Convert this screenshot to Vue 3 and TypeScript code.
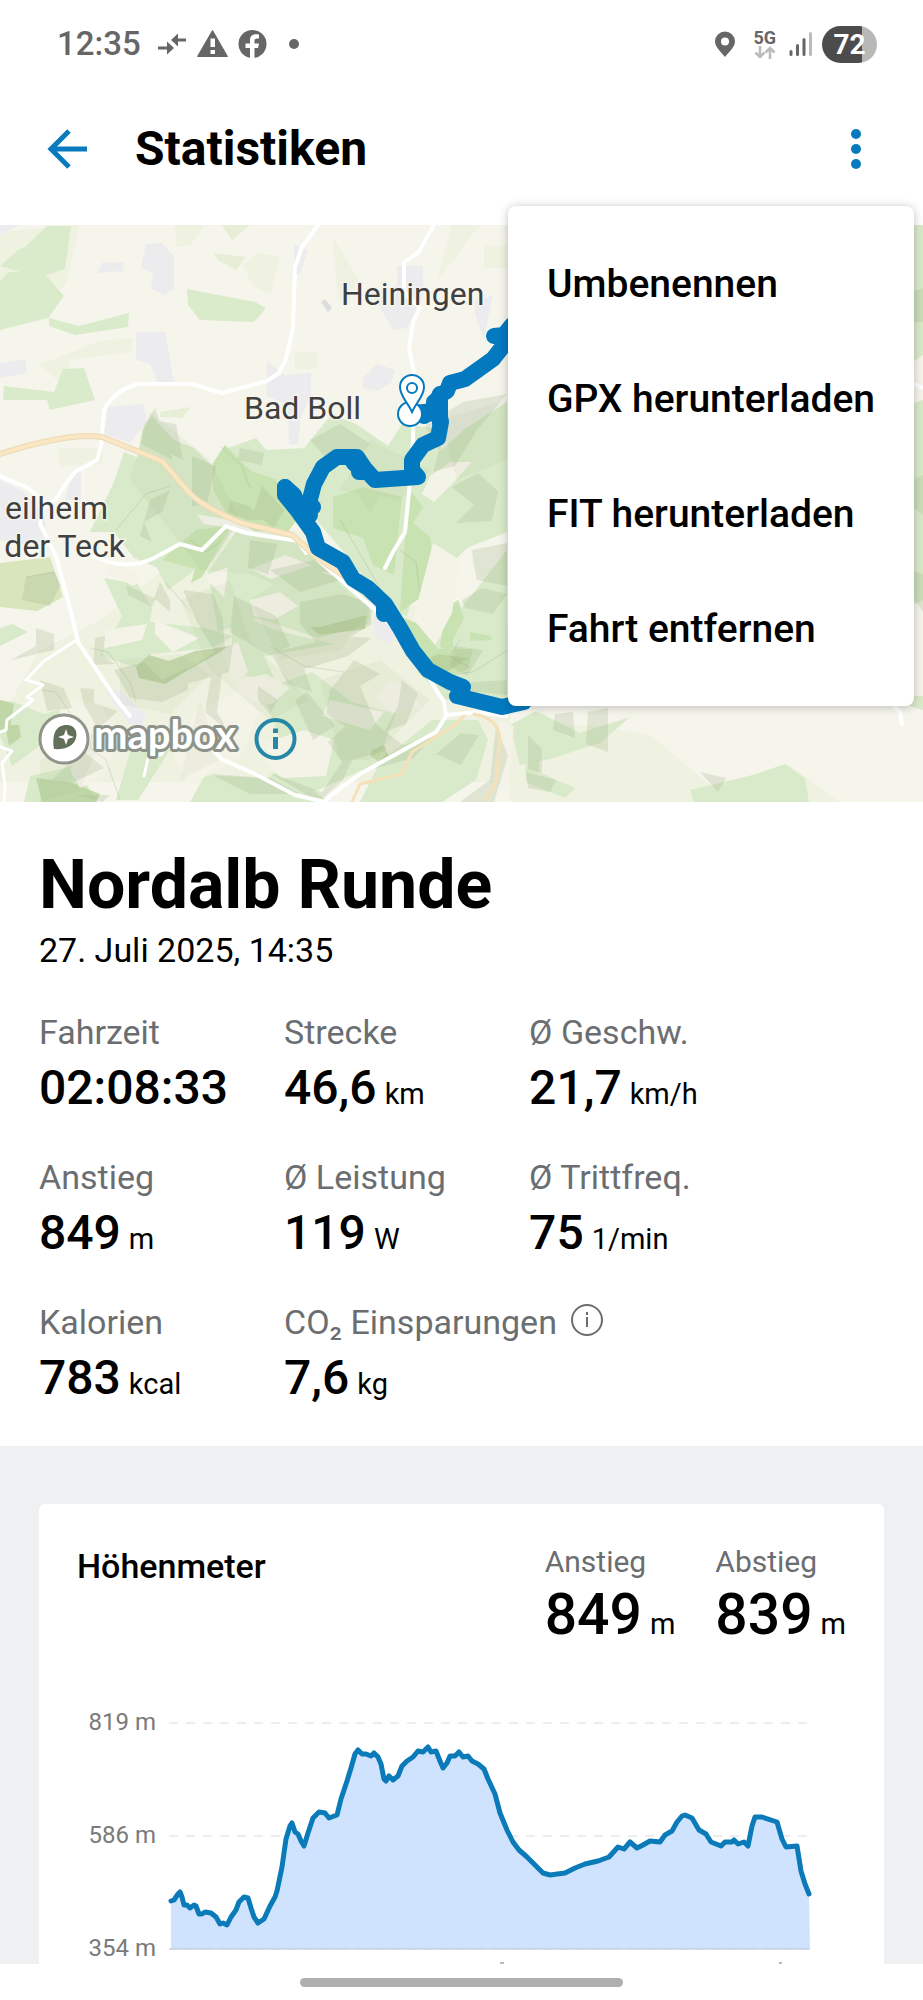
<script setup lang="ts">
import { ref } from 'vue'

interface Stat {
  label: string
  value: string
  unit?: string
  wide?: boolean
}

const menuOpen = ref(true)
const menuItems: string[] = ['Umbenennen', 'GPX herunterladen', 'FIT herunterladen', 'Fahrt entfernen']

const stats: Stat[] = [
  { label: 'Fahrzeit', value: '02:08:33' },
  { label: 'Strecke', value: '46,6', unit: 'km' },
  { label: 'Ø Geschw.', value: '21,7', unit: 'km/h' },
  { label: 'Anstieg', value: '849', unit: 'm' },
  { label: 'Ø Leistung', value: '119', unit: 'W' },
  { label: 'Ø Trittfreq.', value: '75', unit: '1/min' },
  { label: 'Kalorien', value: '783', unit: 'kcal' },
  { label: 'CO₂ Einsparungen', value: '7,6', unit: 'kg', wide: true },
]

const totals: Stat[] = [
  { label: 'Anstieg', value: '849', unit: 'm' },
  { label: 'Abstieg', value: '839', unit: 'm' },
]

const gridLines = [
  { label: '819 m', y: 74 },
  { label: '586 m', y: 187 },
  { label: '354 m', y: 300 },
]

// Elevation profile, in plot coordinates.
const profile: [number, number][] = [
  [94, 252], [97, 251], [101, 245], [103, 243], [105, 248], [107, 256], [110, 256], [113, 259], [117, 256],
  [119, 257], [122, 265], [125, 265], [128, 263], [134, 264], [139, 268], [143, 275], [146, 274], [150, 276],
  [154, 268], [159, 261], [162, 253], [167, 248], [171, 249], [174, 259], [177, 268], [181, 274], [187, 270],
  [193, 257], [198, 248], [200, 242], [205, 218], [209, 190], [213, 177], [215, 174], [218, 183], [221, 185],
  [224, 192], [227, 197], [231, 184], [236, 169], [242, 163], [248, 164], [252, 169], [260, 166], [264, 150],
  [270, 132], [274, 119], [278, 105], [281, 101], [285, 105], [289, 105], [294, 107], [297, 104], [301, 108],
  [304, 115], [307, 130], [309, 132], [312, 127], [316, 131], [321, 127], [325, 117], [330, 112], [336, 108],
  [341, 102], [346, 103], [351, 98], [354, 103], [359, 102], [363, 112], [366, 119], [370, 114], [373, 107],
  [378, 107], [382, 103], [386, 108], [391, 107], [395, 112], [401, 115], [407, 120], [411, 130], [418, 145],
  [423, 164], [430, 181], [436, 193], [442, 201], [450, 208], [459, 217], [466, 224], [473, 226], [488, 224],
  [498, 219], [508, 215], [521, 212], [532, 208], [541, 198], [547, 200], [553, 193], [560, 199], [566, 196],
  [573, 192], [583, 193], [588, 186], [595, 182], [600, 173], [605, 167], [608, 166], [615, 169], [622, 181],
  [629, 185], [634, 193], [644, 197], [648, 193], [655, 193], [657, 191], [661, 195], [667, 193], [671, 197],
  [675, 177], [678, 168], [685, 168], [700, 173], [705, 190], [709, 198], [720, 197], [724, 222], [728, 235],
  [732, 245],
]
const linePath = 'M' + profile.map((p) => p.join(' ')).join('L')
const areaPath = `${linePath}L733 300H94Z`
</script>

<template>
  <div class="page">
    <div class="status-bar">
      <div class="status-group">
        <span class="clock">12:35</span>
        <svg class="status-icons" width="146" height="32" viewBox="154 28 146 32" fill="#666" aria-hidden="true">
          <path d="M157 46.5h9v-5l7 6.500-7 6.500v-5h-9zM185 38.500h-8v-5l-7 6.500 7 6.500v-5h8z" />
          <path d="M211.500 30.500 226.500 56.500h-30z" stroke="#666" stroke-width="1" stroke-linejoin="round" />
          <path d="M209.500 38.500h4.500v8.500h-4.500zM209.500 50h4.500v4h-4.500z" fill="#fff" />
          <circle cx="251.500" cy="44" r="14" />
          <path d="M249 58.500V48h-4.500v-4.500h4.500v-3.500c0-4.500 3-6.500 9-5.500v4c-3.500-.4-4.500.4-4.500 2.500v2.500h4.500l-1 4.500h-3.500v10.500z" fill="#fff" />
          <circle cx="293" cy="44" r="5" />
        </svg>
      </div>
      <div class="status-group right">
        <svg width="22" height="27" viewBox="0 0 22 27" aria-hidden="true">
          <path d="M11 26C6 20 1 15.500 1 10.500a10 10 0 0 1 20 0C21 15.500 16 20 11 26Z" fill="#666" />
          <circle cx="11" cy="10.500" r="4" fill="#fff" />
        </svg>
        <span class="network">
          <span>5G</span>
          <svg width="22" height="13" viewBox="0 0 22 13" fill="none" stroke="#bbb" stroke-width="2.500" aria-hidden="true">
            <path d="M6 0v11M1.500 6.500 6 11l4.500-4.500M16 13V2M11.500 6.500 16 2l4.500 4.500" />
          </svg>
        </span>
        <svg width="24" height="26" viewBox="0 0 24 26" aria-hidden="true" stroke-width="3" stroke-linecap="round">
          <path d="M2 20.500v3M8.500 14.500v9M15 8.500v15" stroke="#666" />
          <path d="M21.500 2.500v21" stroke="#bbb" />
        </svg>
        <span class="battery">72</span>
      </div>
    </div>

    <header class="app-bar">
      <button class="icon-button" type="button" aria-label="Zurück">
        <svg width="42" height="42" viewBox="0 0 42 42" fill="none" stroke="#0a7abf" stroke-width="5">
          <path d="M22 3 4 21l18 18M4 21h36" />
        </svg>
      </button>
      <h1>Statistiken</h1>
      <button class="icon-button" type="button" aria-label="Menü" :aria-expanded="menuOpen" @click="menuOpen = !menuOpen">
        <svg width="42" height="42" viewBox="0 0 42 42" fill="#0a7abf">
          <circle cx="21" cy="6" r="5" /><circle cx="21" cy="21" r="5" /><circle cx="21" cy="36" r="5" />
        </svg>
      </button>
    </header>

    <nav v-if="menuOpen" class="menu">
      <button v-for="item in menuItems" :key="item" type="button">{{ item }}</button>
    </nav>

    <div class="map">
      <svg viewBox="0 225 923 577" preserveAspectRatio="xMidYMid slice" role="img" aria-label="Karte der Fahrt">
        <rect y="225" width="923" height="577" fill="#f5f5ec" />

        <!-- meadows -->
        <g fill="#eff2e0">
          <path d="M0 232 80 225 66 285 0 332zM38 365l62-24 33-3-2 14-60 8-8 24zM175 225h30l-14 20-15 2zM243 265l15-12 22 3-9 38-18-8zM333 238l25 40-12 28-9-12zM452 225h28l-44 58zM484 246h23v22h-23zM58 448l45 0v16l-43 2zM295 352h22v17h-22z" />
          <path d="M0 720 40 650l60-30 100-80 100-10 80 80 100-10 30 30v152H0zM510 725h80l60 10 60 50 80-20 50 37H510z" />
        </g>

        <!-- northern woods -->
        <g fill="#d9ebca">
          <path d="M25 247 47 226h24l-6 43-22 7-20-3-23-7 18-16zM8 272l36 1 20 23-16 22-48 12v-48z" />
          <path d="m49 318 30 8 50-13-1 14-53 8-26-9zM187 289l68 13 11 6-12 14-54-2-12-15zM4 386l50 6 9-23 21-1 11 32-45 10-3-10-44 0z" />
          <path d="M214 253l32 4-10 13-18-10zM222 225h28l-18 15zM160 412l31-5-9 11-22-1z" fill="#e6eed6" />
        </g>

        <!-- built-up areas -->
        <g fill="#ececee">
          <path d="M146 244l16-1 12 13v33l-11 6-12-7 2-15-12-5zM97 273l6-11h20v9zM136 332h29l9 50-16 2-8-20-14-4zM0 363l26-4v14l-26 5zM108 407l35-3 4 18-17 21-26-9zM72 470h9v30h-16zM267 361l18 14 26-2v23l-10 20-3 28-9 1-1-40-21-9zM294 244l14 6-8 24h-6zM397 266h26v30l-16 32-14 2-22-38 26-6zM363 378l14-14 18 6-3 12-15 9-14-3zM475 301l18-6-9 44-9-25zM0 480l23 11 22 25v25l-20 4-25-5zM104 688l16 3 26 24-5 16-12-8-16-20zM374 612l24 22-9 10-15-8z" />
          <path d="M0 225h20l-20 10z" />
          <path d="M321 302l4-3 7 9-4 4z" fill="#dcdcdc" />
        </g>

        <!-- forest on the slopes -->
        <g fill="#d9eaca">
          <path d="M142 430l10-14 22 24 20 8 18 18 16-18 28-10 10 12 38-2 28-34 24 10 32 22 14-22 30 4 10 22 24-22 41-26v130l-40 16-18 18-30 8-12 42-30-6-26-50-42-48-80 8-66-12-30-26z" />
          <path d="M124 452l34 14 22 24 24 34 30 4-22 34-34-10-20 16-24-10-20-26-24 0 24-50z" />
          <path d="M104 578l34 6 14 24-2 14 54 6 30 8-22 12-60 6-14 14-38-12 22-40zM154 562l30-36 28 4 8 12-28 30-24 18zM236 532l60 6 44 22 34 48-6 16-50 14-60-20-40 14-10-60z" />
          <path d="M232 610l42 20 60 14-70 12 12 26-30-6-14-30zM262 690l50-18 40 30 44 12-20 50-58 26-44 12-18-14 32-26z" />
          <path d="M0 628l12-4 16 8-28 14zM0 700l14 2 30 12 42-12 20 22-30 18-34 2-30 22-12-30zM30 776l44-10 24 36H24zM130 752l40-2-32 50h-22zM205 775l95 5 28 22h-138zM380 762l52-42 46 0 10 20-12 40-34 22h-82z" />
          <path d="M452 620l55-70v150l-60 0-30-28 20-30zM510 725l26-14 44 22 50-16-30 26-50 16-30 6zM525 742l14 10 0 20 36 16-10 10-39-16zM690 790l60-14 35-12 20 14 4 24h-115zM905 220l18 5v130l-14 10zM896 410l27-10v200l-22 12-5-40zM890 696l33 0v14l-33-10z" />
        </g>
        <g fill="#c9e2b1">
          <path d="M213 463l12-18 26 26 24 8 24 38-12 16-32-2-26-12-16-30z" />
          <path d="M333 497l30-10 39 10-8 78-21-10-10-27-30-10z" />
          <path d="M410 490l13 17-10 16 17 14 3 23-8 14 10 14-35 24 4-62z" />
          <path d="M162 560l34-30 36-5-30 52-11 6 4-14z" />
          <path d="M393 613l37 16 7 20 36 0-5 20-18 8-24-8zM446 608l12-8 6 18-12 24 10 22-22-18zM470 632l20 4 2 4-22 1z" />
        </g>
        <g fill="#b5cf9a" opacity=".75">
          <path d="M310 627l10 0 47-12-2 14-45 6zM136 667l13-12 20 6 26-10 36-5-46 26-20 12-26-6zM0 700l14 4-4 24-10 4zM5 725h14l2 12-12 9zM36 778l34 4 30 12-4 8H42zM372 750l12-5 5 12-9 6-10-8zM420 664l18-10 30 4-24 16-14 10z" />
        </g>
        <path d="M0 563l50-6 13 40-26 14-37-4z" fill="#d9e5bd" />

        <g fill="#f4f3e8">
          <path d="M430 476l20-14 22 0-20 22-18 18-12-8zM433 543l27 17-8 53-17 32-22-26 8-30z" />
          <path d="M268 742l36-12 30 10-8 36-44 2-18-16zM155 620l44 18-26 14-18-18zM105 630l42-6-5 16-37 8zM206 575l22-8-4 30-16-16zM195 712l40-20 24 20-18 44-52 30-16-30zM330 700l54 12-14 18-48-14z" />
          <path d="M320 572l42 0-12 10zM285 555l26 10-40 14-20-10zM250 600l30-8 18 14-24 14-20-4zM222 650l16-8 10 30-16 10zM390 680l20 8 12 20-30 4-16-14zM60 700l40 4 18 30-30 8-28-20zM90 742l24 6-8 26-26 14-10-18z" />
          <path d="M236 680l30-6 24 14-18 16-34-4zM110 560l34 16-10 10-28-12zM500 722l14 4-6 60-16 0z" opacity=".9" />
        </g>
        <g fill="#9db082" opacity=".23">
          <path d="M144 425l11-17 18 52-32-16zM152 420l24 4 7 36-24-12zM192 456l24 10-9 38-15 2zM240 448l24 5-2 12-24-5zM26 577l28-5 6 14-10 20-28-6zM36 628l18 6v16l-43 10 25-14zM95 638l10-2-2 20 12 8-22 1zM114 670l30-8 18 18 24-12 2 22-26 12-32-4zM126 585l30 14-4 8-24-12zM160 582l10 18v12l-16-14z" />
          <path d="M183 590l30 4 10 24 2 32-8 62 10 18-22-18 10-60-18-30zM234 596l42 20 14 30-20 10-40-24zM250 540l28 4-10 30-20-6zM270 570l44-10 26 20-40 12zM215 652l18-8-4 28-50 14-22 14-3-14 30-14zM300 602l42-8 26 8 4 22-20 12-36 6-16-18zM264 640l38 22 10 30-24-8z" />
          <path d="M150 500l20-10-8 22-18 10 8 20-12-6zM230 500l18 6 16 14-16 0-20-8zM262 486l22 24-10 18-20-16zM310 440l30-16 30 20-10 10-34 4z" />
          <path d="M282 650l60-14 30 2-24 18-46 14zM330 690l24-30 26 14-20 12 16 38 28 22-52 14 2-28-28-18zM295 700l12-8 28 34-22 14zM268 772l54 20 20-30-14-20 20-18 15 12-20 44-24 22zM210 774l60 4 30 16h-50zM258 686l20 14-8 14-12-14zM40 680l24 8 8 20-25 3zM80 688l14 1v14l24 8-20 18-14-24zM52 780l30-30 22 18-30 14zM75 795l35 0-7 7z" />
          <path d="M425 426l38-24 44-8-30 36-22 36-22 6 6-22zM452 487l26-14 20 18-6 30-36 2 18-18zM462 600l20-12 25 6-14 20-28-6zM472 550l35-7v43l-30-6-4-20zM455 646l28 4-16 26-17-10zM446 684l61-4v15l-48-5zM435 755l26-22 18 2-18 30-22-10zM496 726l12 30-14 46-34 0 30-22zM402 680l16 14-12 30-22 8 14-26zM388 750l44-14-18 22-38 10z" />
          <path d="M555 714l18-2 2 26-22-8zM588 712l20-4v44l-22-8zM528 735l14 14v24l-14-4zM526 772l30 8-6 12-22-4zM912 292l11-4v34h-10zM913 480l10-5v40l-12-9zM908 570l15 4v38l-8-12zM700 772l26 6-8 14z" />
        </g>
        <g fill="#9db082" opacity=".09">
          <path d="M150 412l60 48 30 60 60 20 40 40-30 20-60-26-50-4-30-40-40-50zM250 600l60-40 60 50-30 40-60 10zM180 600l50-20 20 60 60 60-40 20-60-50zM320 680l60-20 50 40-60 60-30 0zM370 440l60 30-30 30-60-10zM440 420l67-20v60l-50 20zM350 480l40-6-20 40zM200 700l20 60-40 20zM120 660l60-6 30 20-40 40-50-10zM40 760l60-20-20 50-40 12z" />
        </g>
        <g fill="none" stroke="#96a880" stroke-opacity=".3">
          <path d="M220 446l22 20 8 22M116 530l30-36 24-8M26 577l28-5 6 14M90 648l18 4 22 30 6 20M270 646l34 20 40 6M340 520l26 44 16 28M400 550l16 12 4 30M120 800l-14-40-16-12 2-14M42 690l14 2 16 24M460 640l-10 16 20 12M508 650l-35 22-16 2M165 582l26 30M190 540l16 12 14-10" />
        </g>

        <!-- roads -->
        <g fill="none" stroke-linejoin="round" stroke-linecap="round">
          <g stroke="#fff" stroke-width="4">
            <path d="M318 225l-16 22-7 20-2 60-7 32-7 14-12 8-45 12-17-5-13-4h-52q-24 4-36 26l-3 36-4 14-22 12-12 16-8 12-12 8" />
            <path d="M434 225l-16 28-14 9v30l16 16-7 14-4 26 5 24-1 70-2 30-6 60-12 20-8 16" />
            <path d="M0 476l28 12 16 14-4 22 8 16 8 16 14 52 8 34 36 54 16 20" />
            <path d="M94 556q32 16 60 2l26-14 22 6 24-24 20 7 52 8 8 12" />
            <path d="M318 560l64 56 24 26 38 60 2 14-10 16-76 42-30 22-5 6-30-7-42-22-32-14-14-17M446 715l30-3 30 4" />
            <path d="M908 624l-2 14-18 44-2 16 14 14 2 12M912 383l11 5" />
          </g>
          <path d="M78 639 44 661 26 680l17 5-16 12 6 3-26 20-1 10-6 2M0 747l12 4-10 12 3 22-1 17M144 776l4-18 14-4 3-10" stroke="#fff" stroke-width="3" />
          <path d="M0 454q70-22 102-17l60 24 24 28q12 16 56 34l50 12 24 22 50 34" stroke="#ecd9b4" stroke-width="6" />
          <path d="M0 454q70-22 102-17l60 24 24 28q12 16 56 34l50 12 24 22 50 34" stroke="#fbe6c4" stroke-width="4" />
          <path d="M352 802l8-18 42-10 10-22 44-28 8-8M474 714q24 4 26 24l-4 44-10 18" stroke="#f5e0b8" stroke-width="3" />
        </g>

        <!-- recorded ride -->
        <g fill="none" stroke="#0379c0" stroke-width="16" stroke-linejoin="round" stroke-linecap="round">
          <path d="M414 413l20-2 2-10 4-6 7-4 3-8 15-4 28-20 11-14 8-8v-12l-8 10-10 1" />
          <path d="M424 416l12-8 4-10M440 394v30M434 402v12M438 408l3 14-3 16-15 7-11 15v10l6 7-43 3-10-11-8-12h-20l-14 10-9 17-5 19 4 4" />
          <path d="M359 472l8 0M353 462l8 8" />
          <path d="M285 487v8l13 16 15 21 5 16 25 14 10 17 15 9 17 16 15 24 13 23 15 19 22 12 13 5-4 8" />
          <path d="M285 487l9 8 8 20 8 0" />
          <path d="M457 696l45 11 22-5M384 606v8" />
        </g>
        <circle cx="410" cy="414" r="12" fill="#fff" stroke="#0379c0" stroke-width="2" />
        <path d="M412 412c-5-11-12-16-12-25a12 12 0 0 1 24 0c0 9-7 14-12 25Z" fill="#fff" stroke="#0379c0" stroke-width="2" />
        <circle cx="412" cy="388" r="5" fill="none" stroke="#0379c0" stroke-width="2" />

        <g class="place">
          <text x="341" y="305">Heiningen</text>
          <text x="244" y="419">Bad Boll</text>
          <text x="108" y="519" text-anchor="end">eilheim</text>
          <text x="125" y="557" text-anchor="end">der Teck</text>
        </g>

        <!-- attribution -->
        <circle cx="64" cy="739" r="24" fill="#fff" stroke="#6f746a" stroke-opacity=".75" stroke-width="3" />
        <path d="M54 749c-2-14 1-24 13-24 7 0 11 6 9 13-2 8-11 12-22 11Z" fill="#62705a" />
        <path d="m66 729 2 6 6 2-6 2-2 6-2-6-6-2 6-2z" fill="#fff" />
        <text class="wordmark" x="94" y="749">mapbox</text>
        <g fill="none" stroke="#2588a8">
          <circle cx="275.500" cy="739" r="19" stroke-width="4" />
          <path d="M275.500 737v12M275.500 728.500v4.500" stroke-width="5" />
        </g>
      </svg>
    </div>

    <main>
      <section class="summary">
        <h2>Nordalb Runde</h2>
        <p class="date">27. Juli 2025, 14:35</p>
        <dl class="stats">
          <div v-for="stat in stats" :key="stat.label" :class="{ wide: stat.wide }">
            <dt>
              {{ stat.label }}
              <button v-if="stat.wide" class="info" type="button" aria-label="Info">
                <svg width="32" height="32" viewBox="0 0 32 32" fill="none" stroke="#6b6e71" stroke-width="2">
                  <circle cx="16" cy="16" r="15" />
                  <path d="M16 13v10M16 8v3" />
                </svg>
              </button>
            </dt>
            <dd>{{ stat.value }}<small v-if="stat.unit">{{ stat.unit }}</small></dd>
          </div>
        </dl>
      </section>

      <section class="details">
        <article class="card">
          <header class="card-head">
            <h3>Höhenmeter</h3>
            <dl class="totals">
              <div v-for="total in totals" :key="total.label">
                <dt>{{ total.label }}</dt>
                <dd>{{ total.value }}<small>{{ total.unit }}</small></dd>
              </div>
            </dl>
          </header>
          <svg class="chart" viewBox="0 0 769 315" role="img" aria-label="Höhenprofil">
            <g stroke="#d9dbdd" stroke-width="1" stroke-dasharray="9 8">
              <path v-for="line in gridLines" :key="line.label" :d="`M92 ${line.y}H733`" />
            </g>
            <path :d="areaPath" fill="#d0e3fe" />
            <path d="M92 300H733" stroke="#b9c6d6" stroke-width="1" />
            <path :d="linePath" fill="none" stroke="#0a7ab8" stroke-width="5" stroke-linejoin="round" stroke-linecap="round" />
            <text v-for="line in gridLines" :key="line.label" x="79" :y="line.y + 7" text-anchor="end">{{ line.label }}</text>
            <path d="M423 314h4M702 314h3" stroke="#777" stroke-width="1" />
          </svg>
        </article>
      </section>
    </main>

    <div class="gesture-bar"><span /></div>
  </div>
</template>

<style>
body {
  margin: 0;
  background: #fff;
}
</style>

<style scoped>
.page {
  position: relative;
  display: flex;
  flex-direction: column;
  min-height: 100vh;
  background: #fff;
  color: #000;
  font-family: Roboto, "Liberation Sans", sans-serif;
}
button {
  margin: 0;
  padding: 0;
  border: 0;
  background: none;
  color: inherit;
  font: inherit;
  cursor: pointer;
}
h1, h2, h3, p, dl, dd {
  margin: 0;
}
.status-bar {
  display: flex;
  align-items: center;
  justify-content: space-between;
  height: 88px;
  padding: 0 46px 0 57px;
  color: #666;
}
.status-group {
  display: flex;
  align-items: center;
  gap: 14px;
}
.status-group.right {
  gap: 9px;
}
.clock {
  font: 500 33px/40px Roboto, sans-serif;
}
.network {
  display: flex;
  flex-direction: column;
  align-items: center;
  margin: 0 4px 0 8px;
  font: 700 18px/16px Roboto, sans-serif;
}
.battery {
  width: 55px;
  height: 37px;
  border-radius: 19px;
  background: linear-gradient(90deg, #4c4c4c 72%, #b8b8b8 72%);
  color: #fff;
  font: 700 28px/38px Roboto, sans-serif;
  text-align: center;
}
.app-bar {
  display: flex;
  align-items: center;
  height: 121px;
  padding: 0 46px 0 47px;
  margin-bottom: 16px;
}
.app-bar h1 {
  flex: 1;
  margin-left: 46px;
  font-size: 48px;
  font-weight: 700;
  line-height: 56px;
}
.icon-button {
  display: flex;
}
.menu {
  position: absolute;
  z-index: 1;
  top: 206px;
  right: 9px;
  display: flex;
  flex-direction: column;
  padding: 20px 39px;
  border-radius: 8px;
  background: #fff;
  box-shadow: 0 1px 10px rgba(0, 0, 0, 0.25);
}
.menu button {
  height: 115px;
  font-size: 39px;
  font-weight: 500;
  text-align: left;
}
.map {
  aspect-ratio: 923 / 577;
}
.map svg {
  display: block;
  width: 100%;
  height: 100%;
}
.place {
  fill: #404040;
  stroke: #f8f8f2;
  stroke-width: 3px;
  stroke-opacity: 0.7;
  paint-order: stroke;
  font: 400 32px Roboto, sans-serif;
}
.wordmark {
  fill: #fff;
  stroke: #8e9389;
  stroke-width: 6px;
  stroke-linejoin: round;
  paint-order: stroke;
  font: 700 40px Lato, sans-serif;
}
main {
  display: flex;
  flex: 1;
  flex-direction: column;
}
.summary {
  padding: 43px 39px 40px;
}
.summary h2 {
  font-size: 68px;
  font-weight: 700;
  line-height: 80px;
}
.date {
  margin-top: 5px;
  font-size: 34px;
  line-height: 40px;
}
.stats {
  display: grid;
  grid-template-columns: repeat(3, 29%);
  row-gap: 41px;
  margin-top: 42px;
}
.stats .wide {
  grid-column: span 2;
}
dt {
  color: #6b6e71;
}
.stats dt {
  display: flex;
  align-items: flex-start;
  gap: 14px;
  font-size: 34px;
  line-height: 40px;
  white-space: nowrap;
}
.stats dd {
  margin-top: 8px;
  font-size: 48px;
  font-weight: 500;
  line-height: 56px;
  white-space: nowrap;
}
dd small {
  margin-left: 8px;
  font-size: 29px;
  font-weight: 400;
  line-height: 1;
}
.info {
  display: flex;
  padding-top: 2px;
}
.details {
  flex: 1;
  padding: 58px 39px 0;
  background: #eff0f2;
}
.card {
  padding: 40px 38px 0;
  border-radius: 6px 6px 0 0;
  background: #fff;
}
.card-head {
  display: flex;
  align-items: flex-start;
  justify-content: space-between;
}
.card-head h3 {
  font-size: 34px;
  font-weight: 500;
  line-height: 44px;
}
.totals {
  display: flex;
  gap: 40px;
}
.totals dt {
  font-size: 30px;
  line-height: 36px;
}
.totals dd {
  font-size: 57px;
  font-weight: 500;
  line-height: 69px;
}
.chart {
  display: block;
  width: 100%;
}
.chart text {
  fill: #7a7a7a;
  font: 400 24px Roboto, sans-serif;
}
.gesture-bar {
  display: flex;
  align-items: center;
  justify-content: center;
  height: 36px;
  background: #fff;
}
.gesture-bar span {
  width: 35%;
  height: 9px;
  border-radius: 5px;
  background: #afafaf;
}
</style>
